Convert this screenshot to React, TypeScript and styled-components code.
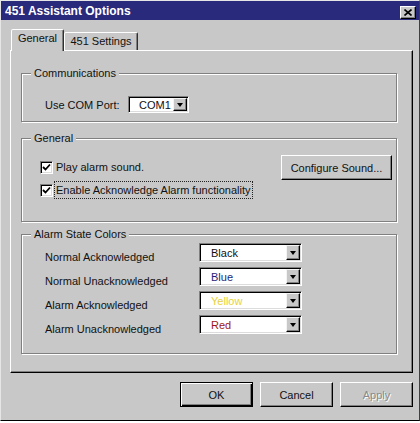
import React from "react";
import styled, { createGlobalStyle } from "styled-components";

const FACE = "#c8c8c8";

const Global = createGlobalStyle`
  html, body { margin: 0; padding: 0; background: #ffffff; }
  body {
    font-family: "Liberation Sans", Arial, sans-serif;
    font-size: 11px;
    color: #111;
  }
`;

const Window = styled.div`
  width: 420px;
  height: 421px;
  box-sizing: border-box;
  background: ${FACE};
  border: 1px solid;
  border-color: #e6e6e6 #404040 #000 #e6e6e6;
  display: flex;
  flex-direction: column;
`;

const TitleBar = styled.div`
  height: 19px;
  flex: none;
  background: #2a2a7c;
  display: flex;
  justify-content: space-between;
  padding: 0 3px 0 4px;
  box-sizing: border-box;
`;

const TitleText = styled.span`
  color: #fff;
  font-weight: bold;
  font-size: 12px;
  line-height: 19px;
  padding-top: 1px;
  white-space: nowrap;
`;

const CloseBtn = styled.div`
  align-self: flex-end;
  margin-bottom: 1px;
  width: 16px;
  height: 13px;
  box-sizing: border-box;
  background: ${FACE};
  border: 1px solid;
  border-color: #fff #000 #000 #fff;
  box-shadow: inset -1px -1px 0 #808080;
  display: flex;
  align-items: center;
  justify-content: center;
`;

const Body = styled.div`
  flex: 1;
  display: flex;
  flex-direction: column;
  padding: 9px 6px 0 9px;
`;

const TabStrip = styled.div`
  height: 21px;
  display: flex;
  align-items: flex-end;
  padding-left: 1px;
`;

const Tab = styled.div<{ $active?: boolean; $w: number }>`
  position: relative;
  z-index: ${(p) => (p.$active ? 2 : 1)};
  width: ${(p) => p.$w}px;
  height: ${(p) => (p.$active ? 22 : 18)}px;
  margin-bottom: ${(p) => (p.$active ? -1 : 0)}px;
  box-sizing: border-box;
  background: ${FACE};
  border: 1px solid;
  border-bottom: none;
  border-color: #fff #303030 transparent #fff;
  border-radius: 2px 2px 0 0;
  box-shadow: inset -1px 0 0 #808080;
  padding-top: 1px;
  line-height: 14px;
  text-align: center;
  white-space: nowrap;
`;

const Panel = styled.div`
  height: 323px;
  box-sizing: border-box;
  border: 1px solid;
  border-color: #fff #000 #000 #fff;
  box-shadow: inset -1px -1px 0 #808080;
  display: flex;
  flex-direction: column;
  padding: 22px 15px 0 10px;
`;

const Group = styled.div<{ $mt?: number; $pb: number }>`
  margin-top: ${(p) => p.$mt ?? 0}px;
  padding-bottom: ${(p) => p.$pb}px;
  border: 1px solid #808080;
  box-shadow: 1px 1px 0 #fff, inset 1px 1px 0 #fff;
  display: flex;
  flex-direction: column;
`;

const Caption = styled.div`
  align-self: flex-start;
  margin: -8px 0 0 9px;
  padding: 0 3px;
  height: 14px;
  line-height: 14px;
  background: ${FACE};
  white-space: nowrap;
`;

const ComRow = styled.div`
  display: flex;
  align-items: center;
  margin-top: 16px;
  padding-left: 23px;
`;

const FieldLabel = styled.div<{ $w: number; $pt?: number }>`
  width: ${(p) => p.$w}px;
  padding-top: ${(p) => p.$pt ?? 0}px;
  line-height: 14px;
  white-space: nowrap;
`;

const Combo = styled.div<{ $w: number; $h: number }>`
  width: ${(p) => p.$w}px;
  height: ${(p) => p.$h}px;
  box-sizing: border-box;
  display: flex;
  background: #fff;
  border: 1px solid;
  border-color: #808080 #fff #fff #808080;
  box-shadow: inset 1px 1px 0 #000, inset -1px -1px 0 #dcdcdc;
  padding: 1px;
`;

const ComboText = styled.div<{ $color: string; $pl: number }>`
  flex: 1;
  padding-left: ${(p) => p.$pl}px;
  color: ${(p) => p.$color};
  display: flex;
  align-items: center;
  white-space: nowrap;
  overflow: hidden;
`;

const ComboButton = styled.div`
  width: 14px;
  flex: none;
  box-sizing: border-box;
  background: ${FACE};
  border: 1px solid;
  border-color: #f4f4f4 #000 #000 #f4f4f4;
  box-shadow: inset -1px -1px 0 #808080;
  display: flex;
  align-items: center;
  justify-content: center;
`;

const Arrow = styled.div`
  width: 0;
  height: 0;
  border-left: 3.5px solid transparent;
  border-right: 3.5px solid transparent;
  border-top: 4px solid #000;
  margin-top: 1px;
`;

const GeneralContent = styled.div`
  display: flex;
  justify-content: space-between;
  align-items: flex-start;
  padding: 10px 4px 0 18px;
`;

const CheckColumn = styled.div`
  display: flex;
  flex-direction: column;
  gap: 5px;
  padding-top: 3px;
`;

const CheckRow = styled.div`
  height: 18px;
  display: flex;
  align-items: center;
`;

const CheckBox = styled.div`
  width: 13px;
  height: 13px;
  box-sizing: border-box;
  background: #fff;
  border: 1px solid;
  border-color: #808080 #fff #fff #808080;
  box-shadow: inset 1px 1px 0 #000, inset -1px -1px 0 #dcdcdc;
  display: flex;
  align-items: center;
  justify-content: center;
`;

const CheckLabel = styled.div<{ $focus?: boolean }>`
  margin-left: 1px;
  padding: 1px 2px 1px 1px;
  line-height: 14px;
  border: 1px dotted ${(p) => (p.$focus ? "#222" : "transparent")};
  white-space: nowrap;
`;

const Button = styled.div<{ $w: number; $h: number; $default?: boolean; $disabled?: boolean }>`
  width: ${(p) => p.$w}px;
  height: ${(p) => p.$h}px;
  box-sizing: border-box;
  background: ${FACE};
  border: 1px solid;
  border-color: ${(p) => (p.$default ? "#000" : "#fff #000 #000 #fff")};
  box-shadow: ${(p) =>
    p.$default
      ? "inset 1px 1px 0 #fff, inset -1px -1px 0 #000, inset -2px -2px 0 #808080"
      : "inset -1px -1px 0 #808080"};
  display: flex;
  align-items: center;
  justify-content: center;
  color: ${(p) => (p.$disabled ? "#8a8a8a" : "#111")};
  text-shadow: ${(p) => (p.$disabled ? "1px 1px 0 #fff" : "none")};
  white-space: nowrap;
`;

const ColorRows = styled.div`
  display: flex;
  flex-direction: column;
  gap: 5px;
  margin-top: 2px;
  padding-left: 23px;
`;

const ColorRow = styled.div`
  display: flex;
  align-items: flex-start;
  height: 19px;
`;

const ButtonRow = styled.div`
  display: flex;
  justify-content: flex-end;
  gap: 7px;
  margin-top: 9px;
`;

const CheckMark = () => (
  <svg width="9" height="9" viewBox="0 0 9 9">
    <path d="M1 4 L3.5 6.5 L8 1.5" fill="none" stroke="#000" strokeWidth="1.8" />
  </svg>
);

const CloseX = () => (
  <svg width="8" height="7" viewBox="0 0 8 7">
    <path d="M0.5 0.5 L7.5 6.5 M7.5 0.5 L0.5 6.5" stroke="#000" strokeWidth="1.6" />
  </svg>
);

const Select: React.FC<{ value: string; color?: string; w: number; h: number; pl?: number }> = ({
  value,
  color = "#111",
  w,
  h,
  pl = 10,
}) => (
  <Combo $w={w} $h={h}>
    <ComboText $color={color} $pl={pl}>
      {value}
    </ComboText>
    <ComboButton>
      <Arrow />
    </ComboButton>
  </Combo>
);

const colors = [
  { label: "Normal Acknowledged", value: "Black", color: "#111" },
  { label: "Normal Unacknowledged", value: "Blue", color: "#1e1e7c" },
  { label: "Alarm Acknowledged", value: "Yellow", color: "#e8d23a" },
  { label: "Alarm Unacknowledged", value: "Red", color: "#a01414" },
];

export default function App() {
  return (
    <>
      <Global />
      <Window>
        <TitleBar>
          <TitleText>451 Assistant Options</TitleText>
          <CloseBtn>
            <CloseX />
          </CloseBtn>
        </TitleBar>
        <Body>
          <TabStrip>
            <Tab $active $w={53}>General</Tab>
            <Tab $w={74}>451 Settings</Tab>
          </TabStrip>
          <Panel>
            <Group $pb={8}>
              <Caption>Communications</Caption>
              <ComRow>
                <FieldLabel $w={83}>Use COM Port:</FieldLabel>
                <Select value="COM1" w={61} h={17} pl={9} />
              </ComRow>
            </Group>
            <Group $mt={16} $pb={22}>
              <Caption>General</Caption>
              <GeneralContent>
                <CheckColumn>
                  <CheckRow>
                    <CheckBox>
                      <CheckMark />
                    </CheckBox>
                    <CheckLabel>Play alarm sound.</CheckLabel>
                  </CheckRow>
                  <CheckRow>
                    <CheckBox>
                      <CheckMark />
                    </CheckBox>
                    <CheckLabel $focus>Enable Acknowledge Alarm functionality</CheckLabel>
                  </CheckRow>
                </CheckColumn>
                <Button $w={111} $h={25}>Configure Sound...</Button>
              </GeneralContent>
            </Group>
            <Group $mt={12} $pb={19}>
              <Caption>Alarm State Colors</Caption>
              <ColorRows>
                {colors.map((c) => (
                  <ColorRow key={c.label}>
                    <FieldLabel $w={154} $pt={7}>
                      {c.label}
                    </FieldLabel>
                    <Select value={c.value} color={c.color} w={103} h={19} />
                  </ColorRow>
                ))}
              </ColorRows>
            </Group>
          </Panel>
          <ButtonRow>
            <Button $w={73} $h={25} $default>
              OK
            </Button>
            <Button $w={73} $h={25}>Cancel</Button>
            <Button $w={73} $h={25} $disabled>
              Apply
            </Button>
          </ButtonRow>
        </Body>
      </Window>
    </>
  );
}
